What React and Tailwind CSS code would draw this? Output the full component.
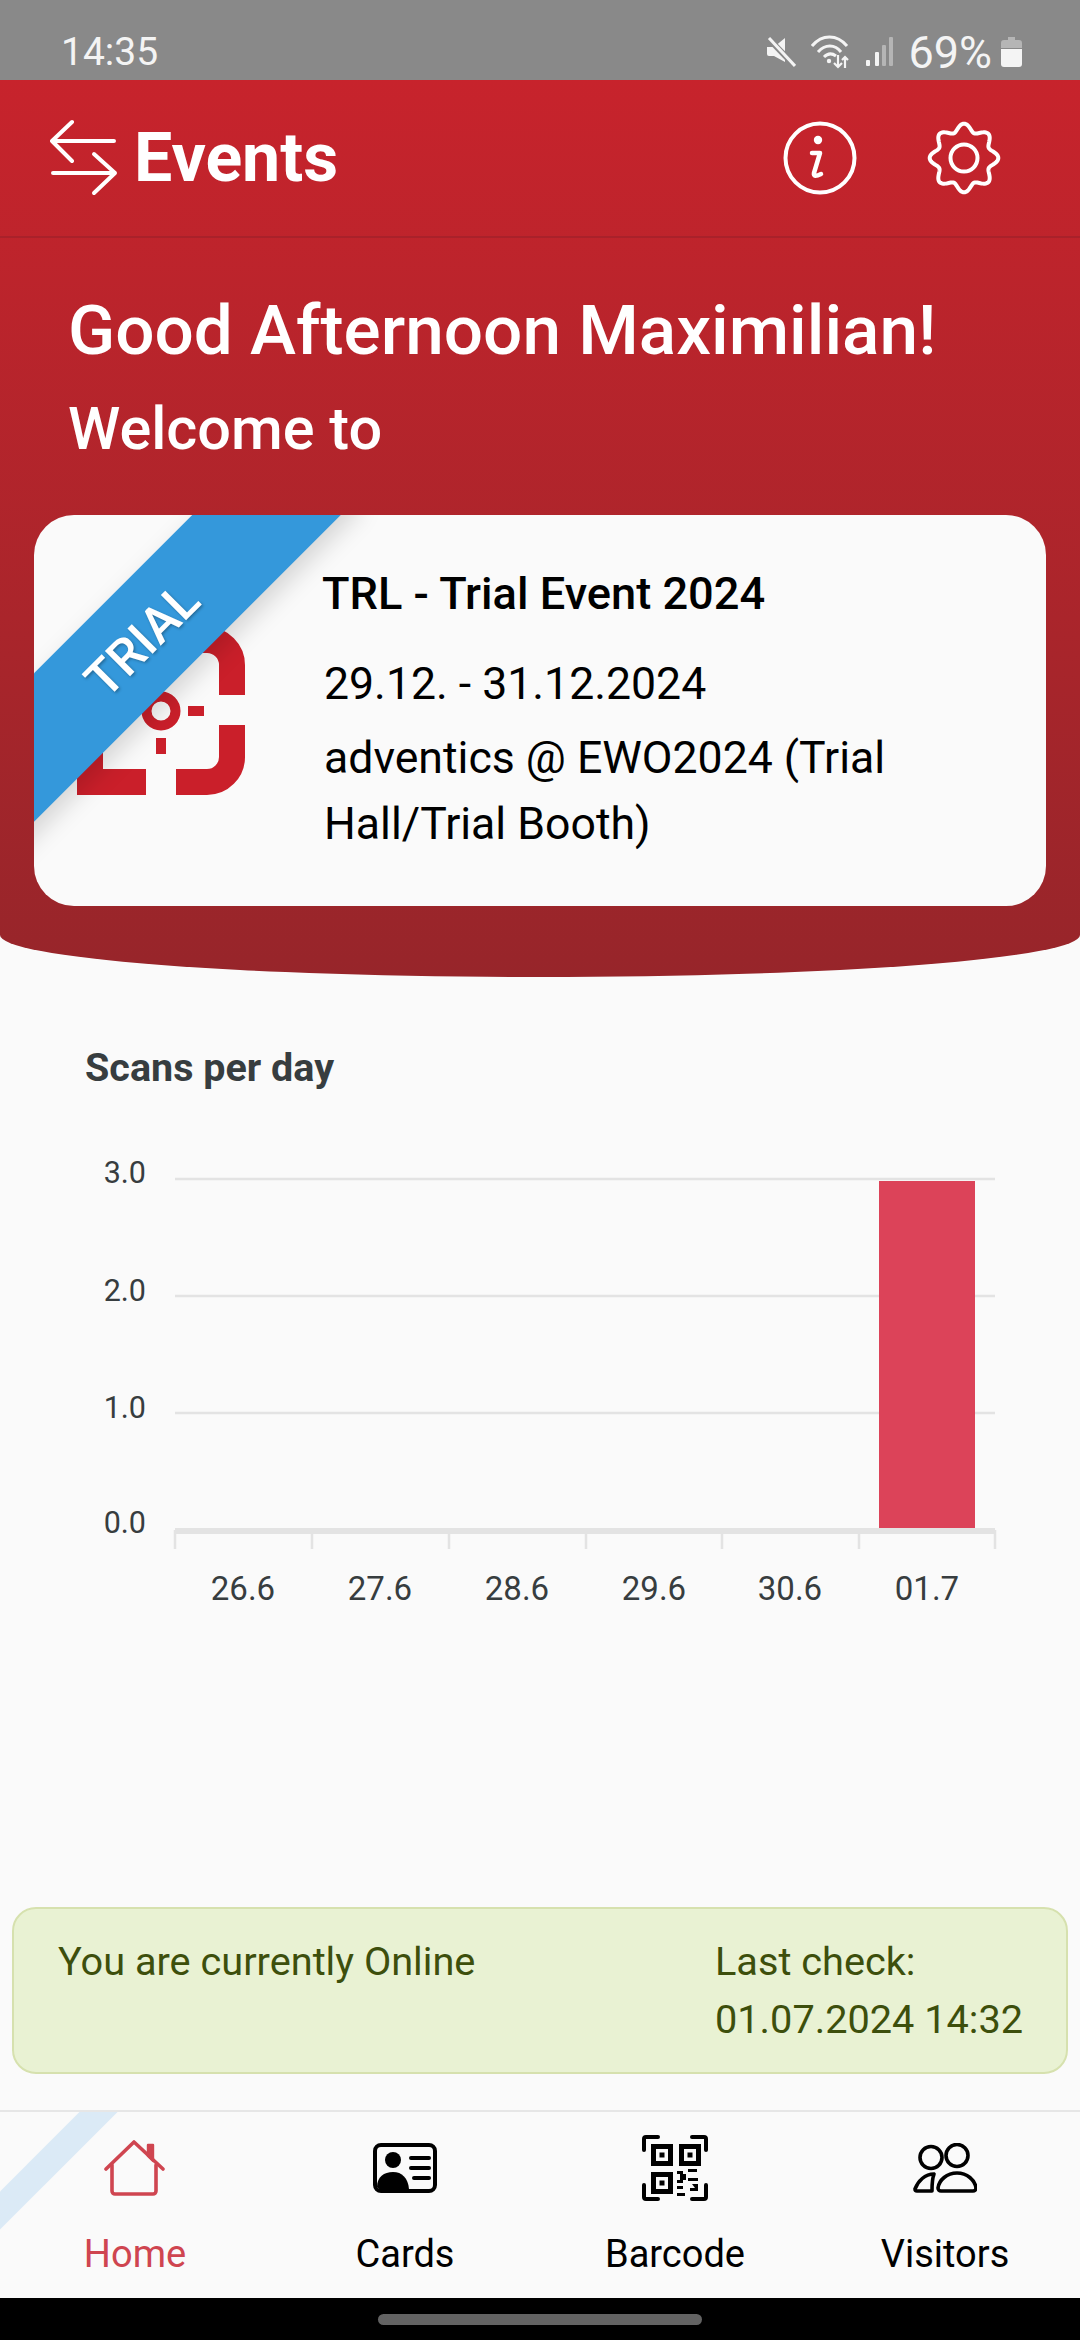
const gearPath = (() => {
  const pts = [];
  for (let i = 0; i < 240; i++) {
    const t = (i / 240) * Math.PI * 2;
    const r = 30.5 + 3.8 * Math.cos(8 * t);
    pts.push(`${(37 + r * Math.sin(t)).toFixed(2)} ${(37 - r * Math.cos(t)).toFixed(2)}`);
  }
  return "M" + pts.join("L") + "Z";
})();

function StatusIcons() {
  return (
    <div className="flex items-center">
      <svg width="30" height="30" viewBox="0 0 30 30" className="mr-[15px]">
        <path d="M1 10h7l11-9v24L8 19H3a2 2 0 0 1-2-2z" fill="#f4f4f4" />
        <path d="M2 1l27 28" stroke="#898989" strokeWidth="6" />
        <path d="M3 1l26 28" stroke="#f4f4f4" strokeWidth="3" />
      </svg>
      <svg width="38" height="34" viewBox="0 0 38 34" fill="none" stroke="#f4f4f4" className="mr-[16px]">
        <path d="M1 11C11 -1 26 -1 36 11" strokeWidth="3" />
        <path d="M7 17c7-8 17-8 23 0" strokeWidth="3" />
        <path d="M13 22c4-4 8-4 12-1" strokeWidth="3" />
        <circle cx="18" cy="26" r="2.2" fill="#f4f4f4" stroke="none" />
        <path d="M27 20v12M23 28l4 4 4-4M34 33V22M31 25l3-3 3 3" strokeWidth="2.2" />
      </svg>
      <svg width="28" height="30" viewBox="0 0 28 30" className="mr-[15px]">
        <rect x="1" y="23" width="4" height="6" rx="1" fill="#f4f4f4" />
        <rect x="10" y="15" width="4" height="14" rx="1" fill="#f4f4f4" />
        <rect x="17" y="8" width="4" height="21" rx="1" fill="#b5b5b5" />
        <rect x="24" y="0" width="4" height="29" rx="1" fill="#b5b5b5" />
      </svg>
      <span className="text-[45px] leading-none text-[#f4f4f4]">69%</span>
      <svg width="21" height="30" viewBox="0 0 21 30" className="ml-[9px] mr-[58px]">
        <path d="M7 0h7v3h4a3 3 0 0 1 3 3v5H0V6a3 3 0 0 1 3-3h4z" fill="#b5b5b5" />
        <path d="M0 12h21v15a3 3 0 0 1-3 3H3a3 3 0 0 1-3-3z" fill="#f4f4f4" />
      </svg>
    </div>
  );
}

function EventLogo() {
  return (
    <svg width="168" height="168" viewBox="0 0 168 168" fill="none" stroke="#ca1f2a" strokeWidth="26">
      <path d="M13 68V38A25 25 0 0 1 38 13H69" />
      <path d="M99 13H130A25 25 0 0 1 155 38V68" />
      <path d="M155 98V130A25 25 0 0 1 130 155H99" />
      <path d="M69 155H13V98" />
      <circle cx="84" cy="84" r="14.5" strokeWidth="10" />
      <path d="M111 84h16M41 84h16M84 111v16M84 41v16" strokeWidth="10" />
    </svg>
  );
}

function Chart() {
  const ys = [
    ["3.0", 1179, 1172],
    ["2.0", 1296, 1290],
    ["1.0", 1413, 1407],
    ["0.0", 1531, 1522],
  ];
  const ticks = [175, 312, 449, 586, 722, 859, 995];
  const xs = [["26.6", 243], ["27.6", 380], ["28.6", 517], ["29.6", 654], ["30.6", 790], ["01.7", 927]];
  return (
    <svg width="1080" height="470" viewBox="0 1150 1080 470" className="block" fontFamily="Roboto, sans-serif" fill="#373d3f">
      {ys.slice(0, 3).map(([, y]) => (
        <line key={y} x1="175" x2="995" y1={y} y2={y} stroke="#e3e3e3" strokeWidth="2.5" />
      ))}
      <rect x="175" y="1528" width="820" height="6" fill="#e3e3e3" />
      {ticks.map((x) => (
        <line key={x} x1={x} x2={x} y1="1530" y2="1549" stroke="#e3e3e3" strokeWidth="2.5" />
      ))}
      <rect x="879" y="1181" width="96" height="347" fill="#dc4359" />
      {ys.map(([l, , c]) => (
        <text key={l} x="146" y={c + 11} textAnchor="end" fontSize="30.5">{l}</text>
      ))}
      {xs.map(([l, x]) => (
        <text key={l} x={x} y="1600" textAnchor="middle" fontSize="33">{l}</text>
      ))}
    </svg>
  );
}

function HomeIcon() {
  return (
    <svg width="62" height="58" viewBox="0 0 62 58" fill="none" stroke="#cf4550" strokeWidth="3.6" strokeLinejoin="round" strokeLinecap="round">
      <path d="M2 30L30 3l29 27" />
      <path d="M8 26v26a3 3 0 0 0 3 3h38a3 3 0 0 0 3-3V26" />
      <path d="M44 17V6h5v16z" fill="#cf4550" strokeWidth="2.4" />
    </svg>
  );
}

function CardIcon() {
  return (
    <svg width="64" height="50" viewBox="0 0 64 50">
      <rect x="2" y="2" width="60" height="46" rx="6" fill="none" stroke="#000" strokeWidth="4" />
      <circle cx="20" cy="17" r="8" />
      <path d="M4 44c0-10 7-15 16-15s15 6 16 17H6z" />
      <path d="M38 15h18M38 25h18M41 35h15" stroke="#000" strokeWidth="4" strokeLinecap="round" />
    </svg>
  );
}

function QrIcon() {
  return (
    <svg width="66" height="66" viewBox="0 0 66 66">
      <g fill="none" stroke="#000" strokeWidth="4" strokeLinecap="round">
        <path d="M2 15V4a2 2 0 0 1 2-2h12" />
        <path d="M50 2h12a2 2 0 0 1 2 2v11" />
        <path d="M2 50v12a2 2 0 0 0 2 2h12" />
        <path d="M64 50v12a2 2 0 0 1-2 2H50" />
      </g>
      <g fill="none" stroke="#000" strokeWidth="5">
        <rect x="11.5" y="11.5" width="17" height="17" />
        <rect x="39.5" y="11.5" width="17" height="17" />
        <rect x="11.5" y="39.5" width="17" height="17" />
      </g>
      <rect x="17.5" y="17.5" width="5" height="5" />
      <rect x="45.5" y="17.5" width="5" height="5" />
      <rect x="17.5" y="45.5" width="5" height="5" />
      <path d="M35 36h6v3h3v6h-3v3h-6v-3h3v-6h-3zM46 34h9v3h-9zM46 43h10v3H46zM35 51h6v3h-6zM50 49h6v7h-8v-3h5zM35 58h8v3h-8z" />
    </svg>
  );
}

function PeopleIcon() {
  return (
    <svg width="64" height="50" viewBox="0 0 64 50" fill="none" stroke="#000" strokeWidth="3.6" strokeLinejoin="round">
      <circle cx="18" cy="14.5" r="11" />
      <circle cx="44" cy="12.5" r="11" />
      <path d="M21 31c-9 0-16 7-19 15a2 2 0 0 0 2 2h15c0-6 0-12 2-17z" />
      <path d="M44 30c-10 0-18 7-19 15a3 3 0 0 0 3 3h32a3 3 0 0 0 3-3c-1-8-9-15-19-15z" />
    </svg>
  );
}

function NavItem({ icon, label, active }) {
  return (
    <div className="relative flex flex-col items-center pt-[22px]">
      <div className="flex h-[68px] items-center justify-center">{icon}</div>
      <span className={`mt-[28px] text-[38px] leading-[48px] ${active ? "text-[#cf4550]" : "text-black"}`}>{label}</span>
    </div>
  );
}

export default function App() {
  return (
    <div className="relative flex h-[2340px] w-[1080px] flex-col overflow-hidden bg-[#fafafa] font-['Roboto',sans-serif]">
      <div className="flex h-20 shrink-0 items-center justify-between bg-[#898989] pl-[61px] pt-[24px]">
        <span className="text-[39px] leading-none text-[#f4f4f4]">14:35</span>
        <StatusIcons />
      </div>

      <div className="shrink-0 rounded-b-[540px_42px] bg-gradient-to-b from-[#c7232c] to-[#97252a] pb-[71px]">
        <div className="flex h-[158px] items-center border-b-2 border-[#a9212a] pl-[50px]">
          <svg width="68" height="78" viewBox="50 118 68 78" fill="none" stroke="#fff" strokeWidth="4" strokeLinecap="round" strokeLinejoin="round">
            <path d="M72 121L52 140L72 160M52 140H114" />
            <path d="M94 153L115 172L94 192M115 172H53" />
          </svg>
          <span className="ml-[16px] text-[68px] font-bold leading-none text-white">Events</span>
          <svg width="76" height="76" viewBox="0 0 76 76" fill="none" stroke="#fff" className="ml-auto mr-[69px]">
            <circle cx="38" cy="38" r="34.5" strokeWidth="4" />
            <circle cx="36" cy="20" r="4.2" fill="#fff" stroke="none" />
            <path d="M30 33H38L32 53Q31 58 39 54" strokeWidth="4.5" strokeLinecap="round" strokeLinejoin="round" />
          </svg>
          <svg width="74" height="74" viewBox="0 0 74 74" fill="none" stroke="#fff" strokeWidth="4" className="mr-[79px]">
            <path d={gearPath} />
            <circle cx="37" cy="37" r="13.5" />
          </svg>
        </div>

        <div className="px-[68px] pt-[51px]">
          <div className="whitespace-nowrap text-[69.3px] font-medium leading-[84px] text-white">Good Afternoon Maximilian!</div>
          <div className="mt-[24px] text-[59.4px] font-medium leading-[64px] text-white">Welcome to</div>
        </div>

        <div className="relative mx-[34px] mt-[54px] flex h-[391px] overflow-hidden rounded-[40px] bg-[#fafafa] pl-[43px]">
          <div className="mt-[112px] shrink-0">
            <EventLogo />
          </div>
          <div className="ml-[79px] pt-[50px] text-black">
            <div className="-ml-[2px] whitespace-nowrap text-[45.2px] font-medium leading-[58px]">TRL - Trial Event 2024</div>
            <div className="mt-[28px] text-[44.6px] leading-[66px]">29.12. - 31.12.2024</div>
            <div className="mt-[8px] text-[44.6px] leading-[66px]">
              adventics @ EWO2024 (Trial
              <br />
              Hall/Trial Booth)
            </div>
          </div>
          <div className="absolute left-[-142px] top-[72px] flex h-[105px] w-[500px] -rotate-45 items-center justify-center bg-[#3498db] shadow-[0_10px_24px_rgba(0,0,0,0.15)]">
            <span className="text-[50px] font-medium leading-none text-white [text-shadow:0_2px_3px_rgba(0,0,0,0.3)]">TRIAL</span>
          </div>
        </div>
      </div>

      <div className="flex min-h-0 flex-1 flex-col">
        <div className="pl-[85px] pt-[67px] text-[39.5px] font-bold leading-[48px] text-[#373d3f]">Scans per day</div>
        <div className="mt-[58px]">
          <Chart />
        </div>
        <div className="mx-3 mb-[36px] mt-auto flex h-[167px] rounded-[24px] border-2 border-[#d6e1ae] bg-[#e9f2d3] pl-[44px] pt-[24px] text-[39.7px] leading-[58px] text-[#3d4f0c]">
          <div className="flex-1">You are currently Online</div>
          <div className="w-[351px]">
            Last check:
            <br />
            01.07.2024 14:32
          </div>
        </div>
      </div>

      <div className="relative grid h-[188px] shrink-0 grid-cols-4 overflow-hidden border-t-2 border-[#e6e6e6]">
        <div className="absolute left-[-101px] top-[36px] h-[27px] w-[300px] -rotate-45 bg-[#dbeaf6]" />
        <NavItem icon={<HomeIcon />} label="Home" active />
        <NavItem icon={<CardIcon />} label="Cards" />
        <NavItem icon={<QrIcon />} label="Barcode" />
        <NavItem icon={<PeopleIcon />} label="Visitors" />
      </div>

      <div className="flex h-[42px] shrink-0 items-start justify-center bg-black pt-[16px]">
        <div className="h-[11px] w-[324px] rounded-full bg-[#636363]" />
      </div>
    </div>
  );
}
